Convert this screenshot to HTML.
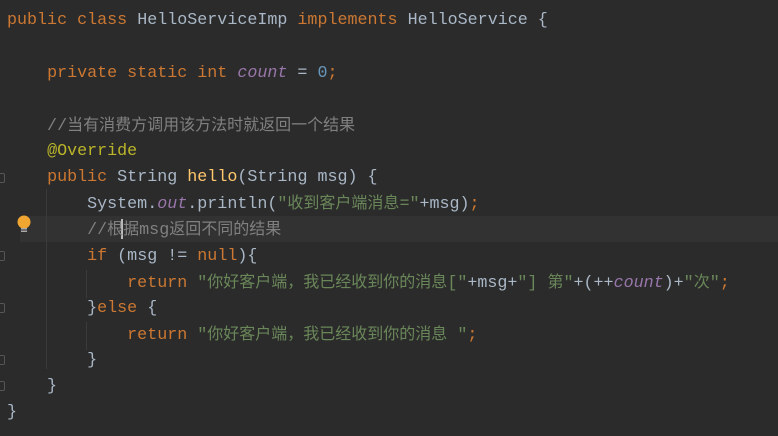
<!DOCTYPE html>
<html><head><meta charset="utf-8"><style>
body{margin:0;width:778px;height:436px;background:#2b2b2b;overflow:hidden;position:relative;font-family:"Liberation Mono","Noto Sans CJK SC",monospace;font-size:16.7px;color:#a9b7c6}
.l{position:absolute;left:7px;height:26px;line-height:26px;white-space:pre}
.z{font-size:16px}
.k{color:#cc7832}.s{color:#6a8759}.n{color:#6897bb}.c{color:#808080}.f{color:#9876aa;font-style:italic}.m{color:#ffc66d}.a{color:#bbb529}
.hl{position:absolute;left:20px;top:216px;width:758px;height:26px;background:#323232}
.g{position:absolute;width:1px;background:#3b3b3b}
.fold{position:absolute;left:0;width:4px;height:8px;border:1px solid #555;border-left:none;border-radius:0 2px 2px 0}
</style></head><body>
<div class="hl"></div>
<div class="g" style="left:46px;top:189px;height:180px"></div>
<div class="g" style="left:86px;top:270px;height:28px"></div>
<div class="g" style="left:86px;top:322px;height:28px"></div>
<div class="fold" style="top:173px"></div>
<div class="fold" style="top:251px"></div>
<div class="fold" style="top:303px"></div>
<div class="fold" style="top:355px"></div>
<div class="fold" style="top:381px"></div>
<svg style="position:absolute;left:16px;top:215px" width="16" height="20"><circle cx="8" cy="7" r="6.5" fill="#f0a732"/><rect x="5" y="13" width="6" height="1.5" fill="#aaa"/><rect x="5" y="15.5" width="6" height="1.5" fill="#aaa"/></svg>
<div style="position:absolute;left:121px;top:219px;width:2px;height:20px;background:#bbb"></div>
<div class="l" style="top:8px"><span class="k">public class </span>HelloServiceImp <span class="k">implements </span>HelloService {</div>
<div class="l" style="top:61px">    <span class="k">private static int </span><span class="f">count</span> = <span class="n">0</span><span class="k">;</span></div>
<div class="l" style="top:113px"><span class="c">    //<span class="z">当有消费方调用该方法时就返回一个结果</span></span></div>
<div class="l" style="top:139px">    <span class="a">@Override</span></div>
<div class="l" style="top:165px">    <span class="k">public </span>String <span class="m">hello</span>(String msg) {</div>
<div class="l" style="top:191px">        System.<span class="f">out</span>.println(<span class="s">"<span class="z">收到客户端消息</span>="</span>+msg)<span class="k">;</span></div>
<div class="l" style="top:217px"><span class="c">        //<span class="z">根据</span>msg<span class="z">返回不同的结果</span></span></div>
<div class="l" style="top:244px">        <span class="k">if </span>(msg != <span class="k">null</span>){</div>
<div class="l" style="top:270px">            <span class="k">return </span><span class="s">"<span class="z">你好客户端，我已经收到你的消息</span>["</span>+msg+<span class="s">"] <span class="z">第</span>"</span>+(++<span class="f">count</span>)+<span class="s">"<span class="z">次</span>"</span><span class="k">;</span></div>
<div class="l" style="top:296px">        }<span class="k">else </span>{</div>
<div class="l" style="top:322px">            <span class="k">return </span><span class="s">"<span class="z">你好客户端，我已经收到你的消息</span> "</span><span class="k">;</span></div>
<div class="l" style="top:348px">        }</div>
<div class="l" style="top:374px">    }</div>
<div class="l" style="top:400px">}</div>
</body></html>
